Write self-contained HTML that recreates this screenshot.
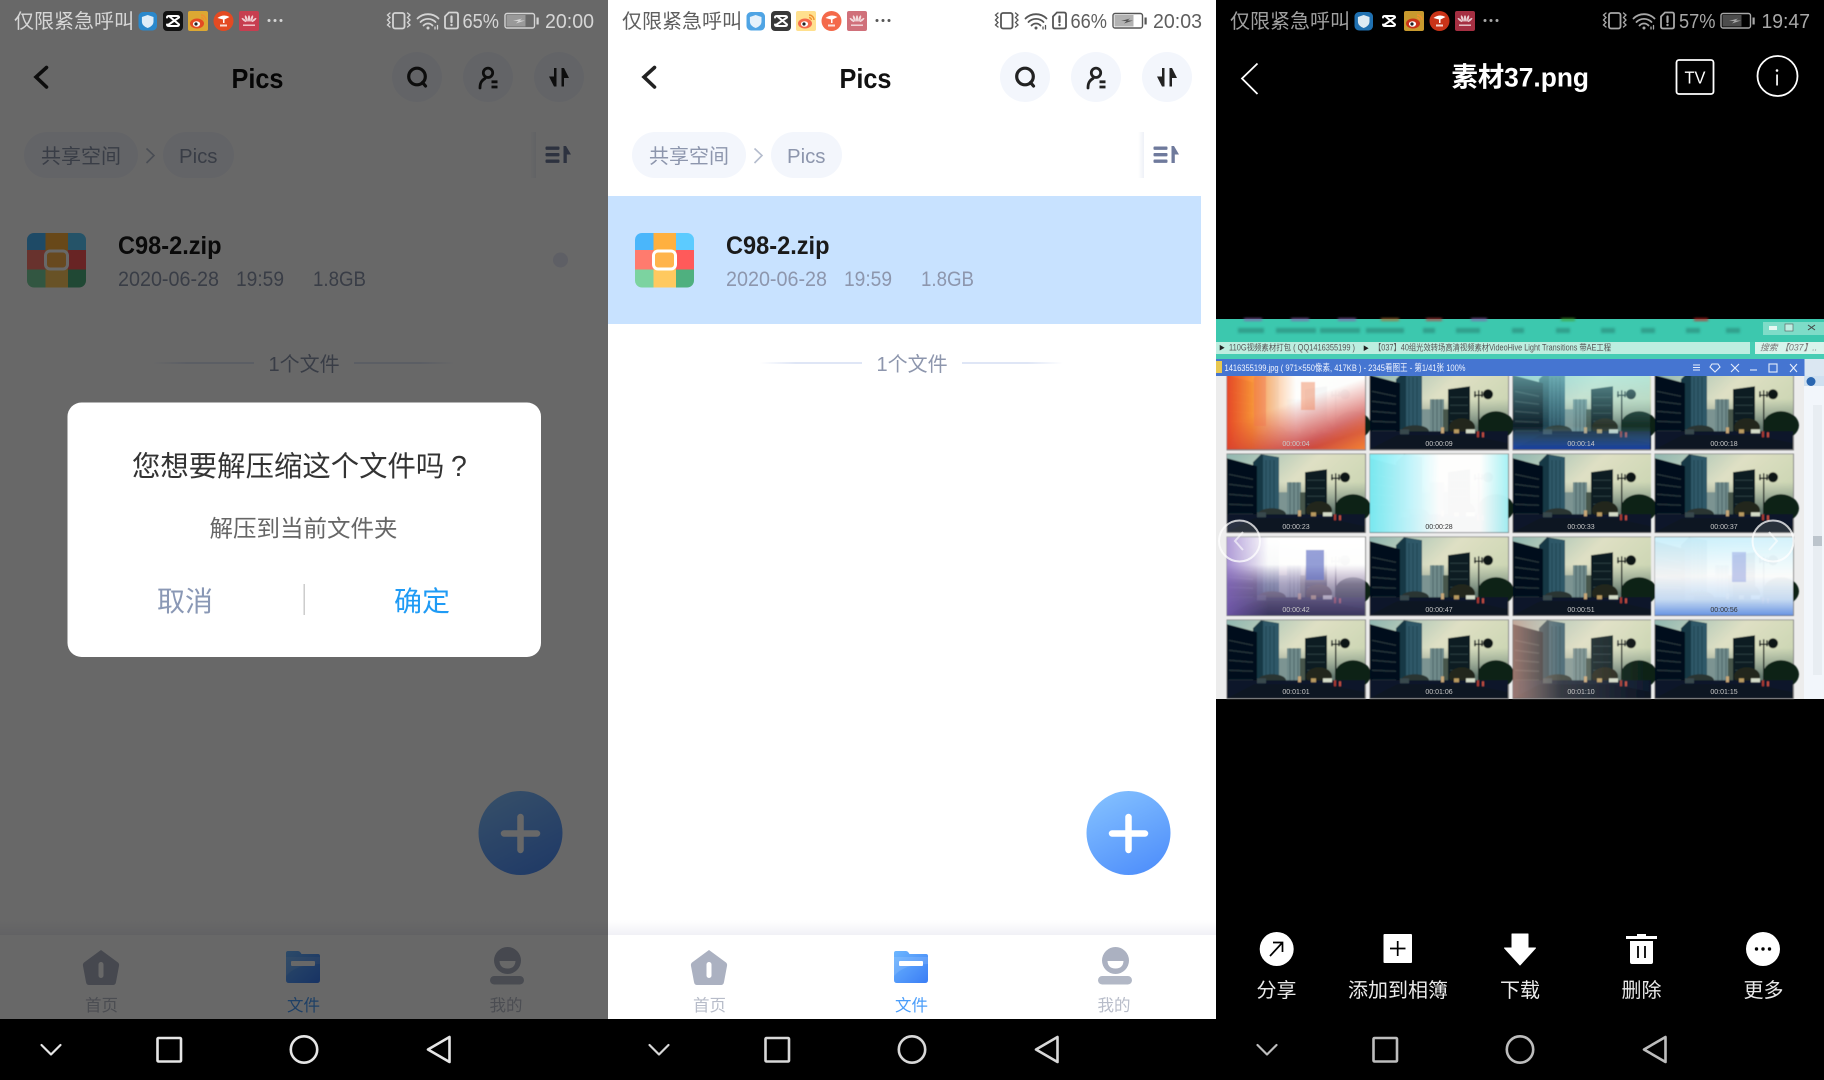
<!DOCTYPE html>
<html lang="zh">
<head>
<meta charset="utf-8">
<title>Screens</title>
<style>
html,body{margin:0;padding:0;background:#000;width:1824px;height:1080px;overflow:hidden}
svg{display:block}
text{font-family:"Liberation Sans","Noto Sans CJK SC",sans-serif;white-space:pre}
.s{font-size:20px}
.b{font-weight:700}
</style>
</head>
<body>
<svg xmlns="http://www.w3.org/2000/svg" width="1824" height="1080" viewBox="0 0 1824 1080">
<defs>
  <linearGradient id="fab" x1="0.25" y1="0" x2="0.75" y2="1"><stop offset="0" stop-color="#82bfff"/><stop offset="1" stop-color="#4f8ffb"/></linearGradient>
  <linearGradient id="fold" x1="0" y1="0" x2="1" y2="1"><stop offset="0" stop-color="#6cb6ff"/><stop offset="1" stop-color="#3a7df5"/></linearGradient>
  <linearGradient id="lineL"><stop offset="0" stop-color="#dfe6f6" stop-opacity="0"/><stop offset=".35" stop-color="#dfe6f6"/><stop offset="1" stop-color="#dfe6f6"/></linearGradient>
  <linearGradient id="lineR"><stop offset="0" stop-color="#dfe6f6"/><stop offset=".65" stop-color="#dfe6f6"/><stop offset="1" stop-color="#dfe6f6" stop-opacity="0"/></linearGradient>
  <linearGradient id="shad" x1="0" y1="0" x2="0" y2="1"><stop offset="0" stop-color="#f2f2f7" stop-opacity="0"/><stop offset="1" stop-color="#f1f1f6"/></linearGradient>
  <linearGradient id="sortsh"><stop offset="0" stop-color="#eef1f7" stop-opacity="0"/><stop offset="1" stop-color="#eef1f7"/></linearGradient>

  <linearGradient id="sky" x1="0" y1="0" x2="1" y2="0.6"><stop offset="0" stop-color="#8fb6b0"/><stop offset=".5" stop-color="#dfe0c4"/><stop offset="1" stop-color="#c8d4b0"/></linearGradient>
  <linearGradient id="haze" x1="0" y1="0" x2="0" y2="1"><stop offset=".35" stop-color="#6f8680" stop-opacity="0"/><stop offset=".72" stop-color="#4f6660" stop-opacity=".85"/></linearGradient>
  <linearGradient id="gFlare"><stop offset="0" stop-color="#ee4a28"/><stop offset=".18" stop-color="#ff9436"/><stop offset=".38" stop-color="#ffd8b8"/><stop offset=".5" stop-color="#fff"/><stop offset="1" stop-color="#fff"/></linearGradient>
  <linearGradient id="gFlareB" x1="0" y1="0" x2="0.6" y2="1"><stop offset=".5" stop-color="#d83c30" stop-opacity="0"/><stop offset="1" stop-color="#c23232" stop-opacity=".95"/></linearGradient>
  <linearGradient id="gFlareR" x1="0" y1="0" x2="1" y2="1"><stop offset=".75" stop-color="#ff9a40" stop-opacity="0"/><stop offset="1" stop-color="#ff9230" stop-opacity=".8"/></linearGradient>
  <linearGradient id="gCyan"><stop offset="0" stop-color="#7ceef6"/><stop offset=".3" stop-color="#c8f9ff"/><stop offset=".5" stop-color="#fff"/><stop offset=".8" stop-color="#fff"/><stop offset="1" stop-color="#a6f2f6"/></linearGradient>
  <linearGradient id="gPur" x1="0" y1="0" x2="0" y2="1"><stop offset="0" stop-color="#fff"/><stop offset=".35" stop-color="#fff" stop-opacity=".97"/><stop offset=".6" stop-color="#c8b0e0" stop-opacity=".6"/><stop offset="1" stop-color="#5a4a88" stop-opacity=".6"/></linearGradient>
  <linearGradient id="gPurL"><stop offset="0" stop-color="#8060c0" stop-opacity=".7"/><stop offset=".3" stop-color="#8060c0" stop-opacity="0"/></linearGradient>
  <linearGradient id="gLBlue" x1="0" y1="0" x2="0" y2="1"><stop offset="0" stop-color="#cdf2ff"/><stop offset=".5" stop-color="#fff"/><stop offset=".8" stop-color="#cfe4fc"/><stop offset="1" stop-color="#6f9cec"/></linearGradient>
  <linearGradient id="gTint" x1="0" y1="0" x2="0" y2="1"><stop offset="0" stop-color="#9ff0f0" stop-opacity=".6"/><stop offset=".7" stop-color="#88d8e0" stop-opacity=".08"/><stop offset="1" stop-color="#1a50d8" stop-opacity=".7"/></linearGradient>
  <linearGradient id="gFade"><stop offset="0" stop-color="#d8a090" stop-opacity=".7"/><stop offset=".35" stop-color="#e8d8c8" stop-opacity=".2"/><stop offset="1" stop-color="#fff" stop-opacity="0"/></linearGradient>
  <filter id="bl" x="-5%" y="-5%" width="110%" height="110%"><feGaussianBlur stdDeviation=".45"/></filter>
  <filter id="bl2" x="-10%" y="-50%" width="120%" height="200%"><feGaussianBlur stdDeviation="1.4"/></filter>

  <g id="i1"><rect width="18.5" height="18.5" rx="4.5" fill="var(--c1)"/><path d="M9.2 3 L15 5 V9.5 C15 12.8 12.4 14.8 9.2 16 C6 14.8 3.4 12.8 3.4 9.5 V5Z" fill="#fff" opacity=".85"/></g>
  <g id="i2"><rect width="20" height="20" rx="4" fill="var(--c2)"/><path d="M6 5 H14 Q16 5 16 6.5 L5 14 M14 15 H6 Q4 15 4 13.500 M4 6.500 Q4 5 6 5 L16 13.500 Q16 15 14 15" stroke="#fff" stroke-width="2" fill="none" stroke-linecap="round"/></g>
  <g id="i3"><rect width="20" height="20" rx="2" fill="var(--c3)"/><ellipse cx="9" cy="12.5" rx="7" ry="5" fill="var(--c4)"/><ellipse cx="8.5" cy="13" rx="3.6" ry="2.8" fill="#fff"/><circle cx="8" cy="13" r="1.6" fill="#222"/><path d="M13 4 A5 5 0 0 1 18 9 M13 6.5 A3 3 0 0 1 15.5 9" stroke="#f09030" stroke-width="1.4" fill="none"/></g>
  <g id="i4"><circle cx="10" cy="10" r="10" fill="var(--c4)"/><path d="M4 7 Q10 2.5 16 6 L11 8.5 V12 H9.5 V8.5Z" fill="#fff"/><rect x="6.5" y="13.5" width="7" height="2" fill="#fff" opacity=".8"/></g>
  <g id="i5"><rect width="20" height="20" rx="2" fill="var(--c5)"/><g fill="#fff" opacity=".75"><ellipse cx="10" cy="7.5" rx="1.1" ry="3.3"/><ellipse cx="7.3" cy="7.5" rx="1.1" ry="3.3" transform="rotate(-20 7.3 7.5)"/><ellipse cx="12.7" cy="7.5" rx="1.1" ry="3.3" transform="rotate(20 12.7 7.5)"/><ellipse cx="5" cy="9" rx="1" ry="3" transform="rotate(-50 5 9)"/><ellipse cx="15" cy="9" rx="1" ry="3" transform="rotate(50 15 9)"/><rect x="4" y="13.5" width="12" height="1.4"/></g></g>
  <g id="dots"><circle cx="269" cy="20.5" r="1.5"/><circle cx="275" cy="20.5" r="1.5"/><circle cx="281" cy="20.5" r="1.5"/></g>
  <g id="appicons">
    <use href="#i1" x="138.5" y="12"/><use href="#i2" x="163" y="11"/><use href="#i3" x="188" y="11"/><use href="#i4" x="213.5" y="11"/><use href="#i5" x="239" y="11"/>
  </g>
  <g id="stR" fill="none" stroke-linecap="round">
    <rect x="393" y="13" width="11.5" height="15.5" rx="2" stroke-width="1.8"/>
    <path d="M390 13 L387.5 15 L390 17.5 L387.5 20 L390 22.5 L387.5 25 L390 27 M407.500 13 L410 15 L407.500 17.5 L410 20 L407.500 22.5 L410 25 L407.500 27" stroke-width="1.3"/>
    <path d="M417.500 18.500 A15 15 0 0 1 438.500 18.500 M420.500 22 A10.500 10.500 0 0 1 435.500 22 M423.500 25.500 A6 6 0 0 1 432.500 25.500" stroke-width="1.8"/>
    <circle cx="428" cy="28" r="1.5" fill="var(--st)" stroke="none"/>
    <path d="M435 27 v2 M437.500 25.500 v3.500" stroke-width="1.3"/>
    <path d="M449 12.500 H456 Q458 12.500 458 14.500 V26.500 Q458 28.500 456 28.500 H447 Q445 28.500 445 26.500 V16.500Z" stroke-width="1.8"/>
    <path d="M451.500 16.500 V22" stroke-width="2.200"/>
    <circle cx="451.500" cy="25" r="1.200" fill="var(--st)" stroke="none"/>
    <rect x="505" y="13.500" width="29.500" height="14.500" rx="2" stroke-width="1.400"/>
    <rect x="506.500" y="15" width="19" height="11.500" fill="var(--st)" opacity=".45" stroke="none"/>
    <rect x="536.500" y="17.500" width="2.200" height="7" fill="var(--st)" stroke="none"/>
    <path d="M513 21 L522 18.500 L519.500 20.500 L525 20.500 L516 23.500 L518.500 21Z" fill="var(--st)" stroke="none"/>
  </g>
  <g id="nav" fill="none" stroke="var(--nv)" stroke-width="2.600" stroke-linejoin="round" stroke-linecap="round">
    <path d="M41.500 1045 L51 1054.500 L60.500 1045" stroke-width="2.200"/>
    <rect x="157.500" y="1038" width="23.500" height="23.500" rx="1"/>
    <circle cx="304" cy="1049.500" r="13.200"/>
    <path d="M449.500 1037 V1062 L428 1049.500Z"/>
  </g>
  <g id="hdr" fill="none" stroke="#222" stroke-linecap="round">
    <path d="M46.500 67.500 L36 77 L46.500 87" stroke-width="3.600" stroke-linejoin="miter"/>
    <circle cx="417" cy="76.500" r="8.300" stroke-width="3.200"/>
    <path d="M422.500 82.500 L425.500 86" stroke-width="3.200"/>
    <circle cx="488" cy="72.800" r="4.700" stroke-width="2.800"/>
    <path d="M480 88 C480 83 481.500 80.500 485 78.500" stroke-width="2.800"/>
    <path d="M491.500 81.800 H497.500 M491.500 87 H497.500" stroke-width="2.800" stroke-linecap="butt"/>
    <path d="M554 68 H556.500 V86.500 H554 L549 76.500 H554Z" fill="#222" stroke="none"/>
    <path d="M561.500 68 H564 L569 78 H564 V86.500 H561.500Z" fill="#222" stroke="none"/>
  </g>
  <g id="sort">
    <rect x="545.500" y="146.500" width="14" height="3.400" rx="1" fill="#6f7a9c"/>
    <rect x="545.500" y="153" width="14" height="3.400" rx="1" fill="#6f7a9c"/>
    <rect x="545.500" y="159.500" width="14" height="3.400" rx="1" fill="#6f7a9c"/>
    <path d="M563.500 146 H566 L571 154.500 H566.800 V163 H563.500Z" fill="#6f7a9c"/>
  </g>
  <g id="zip">
    <clipPath id="zipc"><rect x="27" y="233" width="59" height="54.500" rx="7"/></clipPath>
    <g clip-path="url(#zipc)">
      <rect x="27" y="233" width="18.500" height="17" fill="#4ab6fb"/><rect x="45.500" y="233" width="22.500" height="17" fill="#ffb03f"/><rect x="68" y="233" width="18" height="17" fill="#5ccbff"/>
      <rect x="27" y="250" width="18.500" height="19.500" fill="#ff7b6e"/><rect x="45.500" y="250" width="22.500" height="19.500" fill="#ffa94c"/><rect x="68" y="250" width="18" height="19.500" fill="#ff5a5a"/>
      <rect x="27" y="269.500" width="18.500" height="18" fill="#7cd3a0"/><rect x="45.500" y="269.500" width="22.500" height="18" fill="#ffc95f"/><rect x="68" y="269.500" width="18" height="18" fill="#4fb07f"/>
    </g>
    <rect x="45.500" y="251" width="22" height="18" rx="4.500" fill="#ffb44c" stroke="#fff" stroke-width="3"/>
  </g>
  <g id="fabg">
    <circle cx="520.500" cy="833" r="42" fill="url(#fab)"/>
    <path d="M504 833.500 H537 M520.500 817 V850" stroke="#fff" stroke-width="6.500" stroke-linecap="round"/>
  </g>
  <g id="tabs">
    <path d="M101 950 L118 962.500 Q119.500 964 119 966 L116 982 Q115.500 985 113 985 H89 Q86.500 985 86 982 L83 966 Q82.500 964 84 962.500Z" fill="#abb1c1"/>
    <rect x="98.500" y="962" width="5" height="16" rx="2.500" fill="#fff"/>
    <path d="M286 953 Q286 951 288 951 H298 Q299.500 951 300.500 952.500 L301.500 954 H318 Q320 954 320 956 V980 Q320 983 317 983 H289 Q286 983 286 980Z" fill="url(#fold)"/>
    <path d="M286 976 Q296 964 320 964 V957 H286Z" fill="#fff" opacity=".12"/>
    <rect x="291" y="961" width="24" height="5" rx="1" fill="#fff"/>
    <circle cx="507.500" cy="960.500" r="13.500" fill="#abb1c1"/>
    <path d="M499.500 961 H515.500 Q515 968.500 507.500 968.500 Q500 968.500 499.500 961Z" fill="#fff"/>
    <rect x="490" y="976" width="34" height="8.500" rx="4.200" fill="#b2b8c6"/>
  </g>
  <g id="city">
    <rect width="138" height="78" fill="url(#sky)"/>
    <rect width="138" height="78" fill="url(#haze)"/>
    <rect x="50" y="38" width="12" height="24" fill="#7c9492"/>
    <rect x="60" y="28" width="14" height="34" fill="#6f8a8a"/>
    <path d="M63 28 V60 M67 28 V60 M71 28 V60" stroke="#4a6264" stroke-width=".8"/>
    <path d="M26 8 L34 0 L52 3 V62 H26Z" fill="#173744"/>
    <path d="M36 1 L52 3 V62 H36Z" fill="#2f5868"/>
    <path d="M39 6 V60 M43 6 V60 M47 6 V60" stroke="#1f4452" stroke-width="1"/>
    <path d="M0 4 L30 12 V72 L0 78Z" fill="#04101a"/>
    <path d="M2 20 L26 25 M2 30 L26 33 M2 40 L26 42 M2 50 L26 51 M2 60 L26 60" stroke="#243238" stroke-width="1.500"/>
    <path d="M78 18 L100 15 V64 H78Z" fill="#0f1e22"/>
    <path d="M80 26 H98 M80 34 H98 M80 42 H98 M80 50 H98" stroke="#2a3e42" stroke-width="1"/>
    <path d="M73 38 H78 V62 H73Z" fill="#46564c"/>
    <circle cx="118" cy="23" r="5" fill="#0b1214"/>
    <rect x="108" y="19" width="1.400" height="46" fill="#141c1e"/>
    <path d="M104 24 H113 M105 20 V26 M112 20 V26" stroke="#141c1e" stroke-width="1.400"/>
    <ellipse cx="126" cy="54" rx="18" ry="14" fill="#0b2016"/>
    <ellipse cx="92" cy="56" rx="13" ry="9" fill="#23251a"/>
    <ellipse cx="45" cy="60" rx="14" ry="6" fill="#2a3430"/>
    <rect x="0" y="60" width="138" height="18" fill="#0e192c"/>
    <path d="M0 78 L27 64 H100 L138 72 V78Z" fill="#0a1322"/>
    <rect x="30" y="58" width="9" height="5" fill="#38484e"/>
    <rect x="96" y="58" width="9" height="4" fill="#d4dcc8"/>
    <rect x="107" y="60" width="2" height="6" fill="#a83a30"/>
    <rect x="71" y="56" width="3" height="6" fill="#c8a878"/>
    <rect x="84" y="58" width="5" height="4" fill="#b89a60"/>
    <rect x="112" y="61" width="2" height="5" fill="#c05040"/>
  </g>
</defs>

<!-- ================= PANEL 1 ================= -->
<g style="--st:#d4d4d4;--nv:#e6e6e6;--c1:#2a88cc;--c2:#111;--c3:#dca833;--c4:#e44a22;--c5:#c73e50">
  <rect width="608" height="1080" fill="#fff"/>
  <circle cx="417" cy="77" r="25" fill="#f3f6fc"/><circle cx="488" cy="77" r="25" fill="#f3f6fc"/><circle cx="559" cy="77" r="25" fill="#f3f6fc"/>
  <use href="#hdr"/>
  <text x="231.500" y="88" class="b" font-size="28" textLength="52" lengthAdjust="spacingAndGlyphs" fill="#111">Pics</text>
  <rect x="24" y="132" width="114" height="46" rx="23" fill="#f3f6fc"/>
  <text x="41" y="163" class="s" fill="#8d96ad">共享空间</text>
  <path d="M146.500 148.500 L154 155.500 L146.500 163" fill="none" stroke="#b4bccd" stroke-width="1.600"/>
  <rect x="163" y="132" width="71" height="46" rx="23" fill="#f3f6fc"/>
  <text x="179" y="163" class="s" fill="#8d96ad" textLength="38.500" lengthAdjust="spacingAndGlyphs">Pics</text>
  <rect x="530" y="132" width="6" height="46" fill="url(#sortsh)"/>
  <use href="#sort"/>
  <use href="#zip"/>
  <text x="118" y="254" class="b" font-size="25" textLength="103.500" lengthAdjust="spacingAndGlyphs" fill="#1a1a1a">C98-2.zip</text>
  <text x="118" y="286" font-size="21" fill="#8d96ad" textLength="101" lengthAdjust="spacingAndGlyphs">2020-06-28</text>
  <text x="236" y="286" font-size="21" fill="#8d96ad" textLength="48" lengthAdjust="spacingAndGlyphs">19:59</text>
  <text x="313" y="286" font-size="21" fill="#8d96ad" textLength="53" lengthAdjust="spacingAndGlyphs">1.8GB</text>
  <rect x="152" y="362" width="102" height="2" fill="url(#lineL)"/>
  <text x="268.500" y="371" class="s" fill="#8d96ad">1个文件</text>
  <rect x="354" y="362" width="101" height="2" fill="url(#lineR)"/>
  <use href="#fabg"/>
  <rect x="0" y="920" width="608" height="15" fill="url(#shad)"/>
  <use href="#tabs"/>
  <text x="85" y="1011" font-size="16.500" fill="#b7bcc9">首页</text>
  <text x="287" y="1011" font-size="16.500" fill="#4a9dfa">文件</text>
  <text x="489.500" y="1011" font-size="16.500" fill="#b7bcc9">我的</text>
  <rect width="608" height="1020" fill="#000" opacity=".592"/>
  <circle cx="560.500" cy="260" r="7.500" fill="#5e5f65"/>
  <rect y="1019" width="608" height="61" fill="#000"/>
  <use href="#nav"/>
  <text x="14" y="28" class="s" fill="#d6d6d6">仅限紧急呼叫</text>
  <use href="#appicons"/><use href="#dots" fill="#d6d6d6"/>
  <use href="#stR" stroke="#d4d4d4"/>
  <text x="462.500" y="28" class="s" fill="#d6d6d6" textLength="36.500" lengthAdjust="spacingAndGlyphs">65%</text>
  <text x="545" y="28" class="s" fill="#d6d6d6" textLength="49" lengthAdjust="spacingAndGlyphs">20:00</text>
  <rect x="67.500" y="402.500" width="473.500" height="254.500" rx="14" fill="#fff"/>
  <text x="132" y="476" font-size="28.400" fill="#333">您想要解压缩这个文件吗<tspan x="451">?</tspan></text>
  <text x="209.500" y="536.500" font-size="23.500" fill="#666">解压到当前文件夹</text>
  <text x="157" y="611" font-size="28" fill="#8a98b5">取消</text>
  <rect x="303.500" y="584" width="1.400" height="31" fill="#c8c8c8"/>
  <text x="394" y="611" font-size="28" fill="#1f9bf5">确定</text>
</g>

<!-- ================= PANEL 2 ================= -->
<g transform="translate(608,0)" style="--st:#555;--nv:#d8d8d8;--c1:#4fa4e4;--c2:#3a3a3a;--c3:#ffe08e;--c4:#f4694a;--c5:#d0707a">
  <rect width="608" height="1080" fill="#fff"/>
  <circle cx="417" cy="77" r="25" fill="#f3f6fc"/><circle cx="488" cy="77" r="25" fill="#f3f6fc"/><circle cx="559" cy="77" r="25" fill="#f3f6fc"/>
  <use href="#hdr"/>
  <text x="231.500" y="88" class="b" font-size="28" textLength="52" lengthAdjust="spacingAndGlyphs" fill="#111">Pics</text>
  <rect x="24" y="132" width="114" height="46" rx="23" fill="#f3f6fc"/>
  <text x="41" y="163" class="s" fill="#8d96ad">共享空间</text>
  <path d="M146.500 148.500 L154 155.500 L146.500 163" fill="none" stroke="#b4bccd" stroke-width="1.600"/>
  <rect x="163" y="132" width="71" height="46" rx="23" fill="#f3f6fc"/>
  <text x="179" y="163" class="s" fill="#8d96ad" textLength="38.500" lengthAdjust="spacingAndGlyphs">Pics</text>
  <rect x="530" y="132" width="6" height="46" fill="url(#sortsh)"/>
  <use href="#sort"/>
  <rect x="0" y="196" width="593" height="128" fill="#c8e2ff"/>
  <use href="#zip"/>
  <text x="118" y="254" class="b" font-size="25" textLength="103.500" lengthAdjust="spacingAndGlyphs" fill="#1a1a1a">C98-2.zip</text>
  <text x="118" y="286" font-size="21" fill="#8d96ad" textLength="101" lengthAdjust="spacingAndGlyphs">2020-06-28</text>
  <text x="236" y="286" font-size="21" fill="#8d96ad" textLength="48" lengthAdjust="spacingAndGlyphs">19:59</text>
  <text x="313" y="286" font-size="21" fill="#8d96ad" textLength="53" lengthAdjust="spacingAndGlyphs">1.8GB</text>
  <rect x="152" y="362" width="102" height="2" fill="url(#lineL)"/>
  <text x="268.500" y="371" class="s" fill="#8d96ad">1个文件</text>
  <rect x="354" y="362" width="101" height="2" fill="url(#lineR)"/>
  <use href="#fabg"/>
  <rect x="0" y="920" width="608" height="15" fill="url(#shad)"/>
  <use href="#tabs"/>
  <text x="85" y="1011" font-size="16.500" fill="#b7bcc9">首页</text>
  <text x="287" y="1011" font-size="16.500" fill="#4a9dfa">文件</text>
  <text x="489.500" y="1011" font-size="16.500" fill="#b7bcc9">我的</text>
  <rect y="1019" width="608" height="61" fill="#000"/>
  <use href="#nav"/>
  <text x="14" y="28" class="s" fill="#5e5e5e">仅限紧急呼叫</text>
  <use href="#appicons"/><use href="#dots" fill="#555"/>
  <use href="#stR" stroke="#555"/>
  <text x="462.500" y="28" class="s" fill="#5e5e5e" textLength="36.500" lengthAdjust="spacingAndGlyphs">66%</text>
  <text x="545" y="28" class="s" fill="#5e5e5e" textLength="49" lengthAdjust="spacingAndGlyphs">20:03</text>
</g>

<!-- ================= PANEL 3 ================= -->
<g transform="translate(1216,0)" style="--st:#a8a8a8;--nv:#bdbdbd;--c1:#1f70b0;--c2:#000;--c3:#c89a2e;--c4:#c93318;--c5:#a52f42">
  <rect width="608" height="1080" fill="#000"/>
  <text x="14" y="28" class="s" fill="#a0a0a0">仅限紧急呼叫</text>
  <use href="#appicons"/><use href="#dots" fill="#a8a8a8"/>
  <use href="#stR" x="0" stroke="#a8a8a8"/>
  <text x="463" y="28" class="s" fill="#a8a8a8" textLength="36.500" lengthAdjust="spacingAndGlyphs">57%</text>
  <text x="545.500" y="28" class="s" fill="#a8a8a8" textLength="48.500" lengthAdjust="spacingAndGlyphs">19:47</text>
  <path d="M41.500 63.500 L26 78.500 L41.500 94" fill="none" stroke="#fff" stroke-width="1.800"/>
  <text x="235.500" y="86.500" class="b" font-size="27" fill="#fff" textLength="137.500" lengthAdjust="spacingAndGlyphs">素材37.png</text>
  <rect x="460.500" y="60" width="37" height="34" rx="2.500" fill="none" stroke="#fff" stroke-width="1.800"/>
  <text x="468.500" y="83.500" font-size="17.500" fill="#fff" textLength="21" lengthAdjust="spacingAndGlyphs">TV</text>
  <circle cx="561.500" cy="76" r="20" fill="none" stroke="#fff" stroke-width="1.800"/>
  <circle cx="561" cy="70.500" r="1.300" fill="#fff"/><rect x="560.200" y="74.500" width="1.700" height="11" fill="#fff"/>

  <rect x="0" y="319" width="608" height="380" fill="#ececec"/>
  <rect x="0" y="319" width="608" height="23" fill="#3cc8ae"/>
  <g filter="url(#bl2)" fill="#2a8e7e" opacity=".7">
    <rect x="22" y="328" width="26" height="5"/><rect x="60" y="328" width="40" height="5"/><rect x="104" y="328" width="40" height="5"/><rect x="150" y="328" width="38" height="5"/><rect x="207" y="328" width="12" height="5"/><rect x="240" y="328" width="24" height="5"/><rect x="296" y="328" width="12" height="5"/><rect x="340" y="328" width="14" height="5"/><rect x="385" y="328" width="14" height="5"/><rect x="425" y="328" width="14" height="5"/><rect x="470" y="328" width="14" height="5"/><rect x="510" y="328" width="14" height="5"/>
  </g>
  <g filter="url(#bl2)" opacity=".75">
    <rect x="28" y="318" width="18" height="3" fill="#8a60b0"/><rect x="75" y="318" width="18" height="3" fill="#8a60b0"/><rect x="122" y="318" width="18" height="3" fill="#8a60b0"/><rect x="165" y="318" width="18" height="3" fill="#b07030"/><rect x="210" y="318" width="16" height="3" fill="#c04040"/><rect x="255" y="318" width="16" height="3" fill="#8a60b0"/><rect x="345" y="318" width="14" height="3" fill="#40a030"/><rect x="478" y="318" width="14" height="3" fill="#d02020"/>
  </g>
  <rect x="547" y="322" width="61" height="13" fill="#7edcc8"/>
  <rect x="553" y="326" width="8" height="4" fill="#e6f8f2"/><rect x="569" y="324" width="8" height="7" fill="#bfeee2" stroke="#555" stroke-width=".6"/><path d="M592 325 L599 330 M599 325 L592 330" stroke="#444"/>
  <rect x="0" y="342" width="608" height="17" fill="#47cdb4"/>
  <rect x="0" y="342" width="534" height="12" fill="#bdeee0"/>
  <rect x="539" y="342" width="69" height="12" fill="#d8f4ec"/>
  <text x="3" y="350" font-size="6" fill="#222">▶</text>
  <text x="13" y="350.500" font-size="8.800" fill="#555" textLength="126" lengthAdjust="spacingAndGlyphs">110G视频素材打包 ( QQ1416355199 )</text>
  <text x="147" y="350.500" font-size="6" fill="#222">▶</text>
  <text x="158" y="350.500" font-size="8.800" fill="#555" textLength="237" lengthAdjust="spacingAndGlyphs">【037】40组光效转场高清视频素材VideoHive Light Transitions 带AE工程</text>
  <text x="544" y="350.500" font-size="8.800" font-style="italic" fill="#777">搜索 【037】..</text>
  <rect x="0" y="359" width="608" height="17" fill="#dbe7f2"/>
  <rect x="588" y="376" width="20" height="323" fill="#f2f6fb"/>
  <rect x="588" y="376" width="20" height="10" fill="#cfe0f0"/>
  <circle cx="595" cy="381.500" r="4.500" fill="#2a66b0"/>
  <rect x="597" y="405" width="9" height="270" fill="#e8edf2"/>
  <rect x="597" y="536" width="9" height="10" fill="#bcc4cc"/>

  <g filter="url(#bl)">
    <g fill="#8a8a8a">
      <rect x="10.500" y="370" width="139.500" height="80.500"/><rect x="153.500" y="370" width="139.500" height="80.500"/><rect x="296.500" y="370" width="138.500" height="80.500"/><rect x="438.500" y="370" width="139.500" height="80.500"/>
      <rect x="10.500" y="453.500" width="139.500" height="79.500"/><rect x="153.500" y="453.500" width="139.500" height="79.500"/><rect x="296.500" y="453.500" width="138.500" height="79.500"/><rect x="438.500" y="453.500" width="139.500" height="79.500"/>
      <rect x="10.500" y="536.500" width="139.500" height="79.500"/><rect x="153.500" y="536.500" width="139.500" height="79.500"/><rect x="296.500" y="536.500" width="138.500" height="79.500"/><rect x="438.500" y="536.500" width="139.500" height="79.500"/>
      <rect x="10.500" y="619.500" width="139.500" height="79.500"/><rect x="153.500" y="619.500" width="139.500" height="79.500"/><rect x="296.500" y="619.500" width="138.500" height="79.500"/><rect x="438.500" y="619.500" width="139.500" height="79.500"/>
    </g>
    <use href="#city" x="11" y="371.300"/><rect x="11" y="371.300" width="138" height="78" fill="url(#gFlare)" opacity=".96"/><rect x="11" y="371.300" width="138" height="78" fill="url(#gFlareB)"/><rect x="11" y="371.300" width="138" height="78" fill="url(#gFlareR)"/>
    <rect x="85" y="382" width="14" height="28" fill="#f08a60" opacity=".5"/><rect x="38" y="376" width="12" height="50" fill="#f07050" opacity=".4"/>
    <use href="#city" x="154" y="371.300"/>
    <use href="#city" x="297" y="371.300"/><rect x="297" y="371.300" width="137" height="78" fill="url(#gTint)"/>
    <use href="#city" x="439" y="371.300"/>
    <use href="#city" x="11" y="454.300"/>
    <use href="#city" x="154" y="454.300"/><rect x="154" y="454.300" width="138" height="78" fill="url(#gCyan)" opacity=".97"/>
    <use href="#city" x="297" y="454.300"/>
    <use href="#city" x="439" y="454.300"/>
    <use href="#city" x="11" y="537.300"/><rect x="11" y="537.300" width="138" height="78" fill="url(#gPur)"/><rect x="11" y="537.300" width="138" height="78" fill="url(#gPurL)"/>
    <rect x="90" y="550" width="18" height="30" fill="#6a78c8" opacity=".7"/>
    <use href="#city" x="154" y="537.300"/>
    <use href="#city" x="297" y="537.300"/>
    <use href="#city" x="439" y="537.300"/><rect x="439" y="537.300" width="138" height="78" fill="url(#gLBlue)" opacity=".95"/>
    <rect x="516" y="552" width="14" height="30" fill="#8a9ae0" opacity=".45"/>
    <use href="#city" x="11" y="620.300"/>
    <use href="#city" x="154" y="620.300"/>
    <use href="#city" x="297" y="620.300"/><rect x="297" y="620.300" width="137" height="78" fill="url(#gFade)"/>
    <use href="#city" x="439" y="620.300"/>
  </g>
  <g font-size="7" fill="#c8c8c8" text-anchor="middle">
    <text x="80" y="446">00:00:04</text><text x="223" y="446">00:00:09</text><text x="365" y="446">00:00:14</text><text x="508" y="446">00:00:18</text>
    <text x="80" y="529">00:00:23</text><text x="223" y="529" fill="#333">00:00:28</text><text x="365" y="529">00:00:33</text><text x="508" y="529">00:00:37</text>
    <text x="80" y="612">00:00:42</text><text x="223" y="612">00:00:47</text><text x="365" y="612">00:00:51</text><text x="508" y="612" fill="#333">00:00:56</text>
    <text x="80" y="694">00:01:01</text><text x="223" y="694">00:01:06</text><text x="365" y="694">00:01:10</text><text x="508" y="694">00:01:15</text>
  </g>
  <g fill="#fff" fill-opacity=".12" stroke="#fff" stroke-opacity=".75" stroke-width="2">
    <circle cx="23.500" cy="541" r="20.500"/><circle cx="557" cy="541" r="20.500"/>
  </g>
  <path d="M27 532 L19 541 L27 550 M553 532 L561 541 L553 550" fill="none" stroke="#fff" stroke-opacity=".6" stroke-width="2"/>
  <rect x="0" y="359" width="588.500" height="17" fill="#4575d1"/>
  <rect x="0" y="361" width="6" height="12" fill="#e8c850"/>
  <text x="8.500" y="371" font-size="9.500" fill="#f0f4ff" textLength="241" lengthAdjust="spacingAndGlyphs">1416355199.jpg ( 971×550像素, 417KB ) - 2345看图王 - 第1/41张 100%</text>
  <g fill="none" stroke="#e8eefc" stroke-width="1.100">
    <path d="M477 365 H484 M477 367.500 H484 M477 370 H484"/>
    <path d="M496 364 L502 364 L504 367 L499 372 L494 367Z"/>
    <path d="M515 364 L523 372 M523 364 L515 372"/>
    <path d="M534 370 H541"/>
    <rect x="553" y="364" width="8" height="8"/>
    <path d="M574 364 L581 372 M581 364 L574 372"/>
  </g>

  <circle cx="60.700" cy="949" r="17" fill="#fff"/>
  <path d="M54 956 L66 943 M57 942.500 H66.500 V952" fill="none" stroke="#000" stroke-width="1.700"/>
  <rect x="167.500" y="934" width="28.500" height="29" rx="1" fill="#fff"/>
  <path d="M174 948.500 H189.500 M181.700 941 V956" stroke="#000" stroke-width="1.700"/>
  <path d="M296 934 H312 V948 H319.500 L304 965 L288.500 948 H296Z" fill="#fff" stroke="#fff" stroke-linejoin="round"/>
  <path d="M421 936 V934 H430 V936 H441 V939 H410 V936Z M414 941 H437 V962 Q437 964 435 964 H416 Q414 964 414 962Z" fill="#fff"/>
  <path d="M422 946 V958 M429 946 V958" stroke="#000" stroke-width="1.800"/>
  <circle cx="547" cy="949" r="17" fill="#fff"/>
  <circle cx="540.500" cy="949" r="1.700"/><circle cx="547" cy="949" r="1.700"/><circle cx="553.500" cy="949" r="1.700"/>
  <g font-size="20" fill="#eaeaea">
    <text x="40.500" y="997">分享</text>
    <text x="132" y="997">添加到相簿</text>
    <text x="284" y="997">下载</text>
    <text x="405.500" y="997">删除</text>
    <text x="527.500" y="997">更多</text>
  </g>
  <use href="#nav"/>
</g>
</svg>
</body>
</html>
